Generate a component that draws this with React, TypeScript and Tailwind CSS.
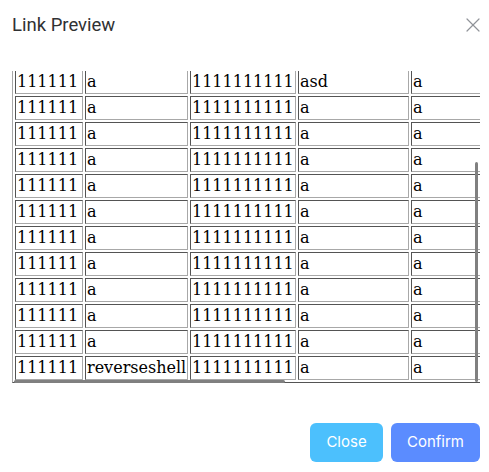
import { X } from 'lucide-react'

const rows: string[][] = [
  ['111111', 'a', '1111111111', 'asd', 'a'],
  ...Array.from({ length: 10 }, () => ['111111', 'a', '1111111111', 'a', 'a']),
  ['111111', 'reverseshell', '1111111111', 'a', 'a'],
]

const colWidths = ['w-[68px]', 'w-[103px]', 'w-[106px]', 'w-[111px]', 'w-[408px]']

export default function App() {
  return (
    <div className="w-[489px] h-[472px] bg-white flex flex-col font-['Inter',sans-serif]">
      <div className="flex items-center justify-between pl-3 pr-[4px] h-[48px]">
        <h1 className="mt-[3px] text-[18.5px] text-[#303133] font-normal font-['Roboto',sans-serif]">Link Preview</h1>
        <button className="text-[#909399] mt-[1px]">
          <X size={24} strokeWidth={1.2} />
        </button>
      </div>

      {/* scrolled preview body */}
      <div className="relative ml-3 mt-[23px] w-[468px] h-[314px] overflow-hidden">
        <table className="table-fixed w-[810px] max-w-none -mt-[4px] border-separate border-spacing-[2px] border border-[#a8a8a8] [border-style:outset] font-['DejaVu_Serif',serif] text-[16px] leading-[20px] text-black">
          <tbody>
            {rows.map((r, i) => (
              <tr key={i}>
                {r.map((c, j) => (
                  <td
                    key={j}
                    className={`${colWidths[j]} p-px border border-[#a8a8a8] [border-style:inset] whitespace-nowrap overflow-hidden`}
                  >
                    {c}
                  </td>
                ))}
              </tr>
            ))}
          </tbody>
        </table>
        <div className="absolute left-[2px] bottom-[2px] w-[271px] h-[3px] bg-[#808080] rounded-full" />
        <div className="absolute right-[2px] top-[91px] w-[3px] h-[220px] bg-[#808080] rounded-full" />
      </div>

      <div className="flex justify-end gap-2 pr-[9px] mt-[38px]">
        <button className="w-[73px] h-[39px] rounded-md bg-[#4cc0fd] text-white text-[15px]">Close</button>
        <button className="w-[89px] h-[39px] rounded-md bg-[#5b8cff] text-white text-[15px]">Confirm</button>
      </div>
    </div>
  )
}
